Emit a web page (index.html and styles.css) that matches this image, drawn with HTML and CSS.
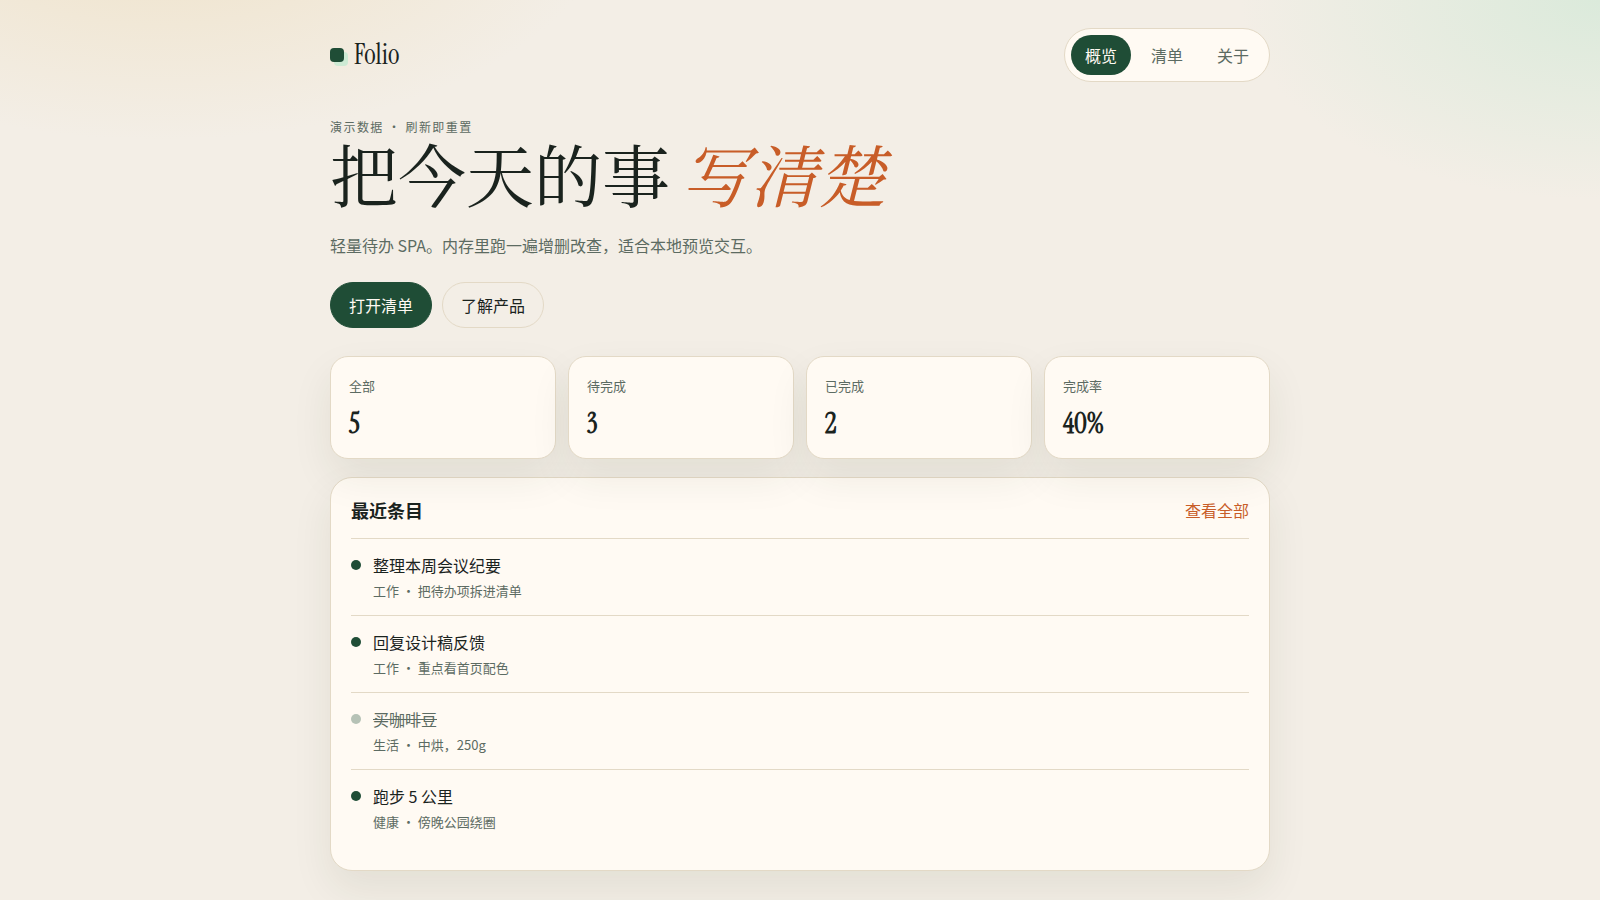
FILE: index.html
```html
<!DOCTYPE html>
<html lang="zh-CN">
<head>
<meta charset="utf-8">
<meta name="viewport" content="width=device-width, initial-scale=1">
<title>Folio</title>
<link rel="stylesheet" href="styles.css">
</head>
<body>
<div class="shell">
  <header class="topbar">
    <a class="brand" href="#overview"><span class="brand-mark"></span>Folio</a>
    <nav class="tabs">
      <a class="tab tab-active" href="#overview">概览</a>
      <a class="tab" href="#list">清单</a>
      <a class="tab" href="#about">关于</a>
    </nav>
  </header>
  <main>
    <section class="hero">
      <p class="eyebrow">演示数据 · 刷新即重置</p>
      <h1 class="headline">把今天的事 <em>写清楚</em></h1>
      <p class="lede">轻量待办 SPA。内存里跑一遍增删改查，适合本地预览交互。</p>
      <div class="actions">
        <button class="btn btn-primary" type="button">打开清单</button>
        <button class="btn" type="button">了解产品</button>
      </div>
    </section>
    <section class="stats">
      <div class="stat"><span class="stat-label">全部</span><strong class="stat-value">5</strong></div>
      <div class="stat"><span class="stat-label">待完成</span><strong class="stat-value">3</strong></div>
      <div class="stat"><span class="stat-label">已完成</span><strong class="stat-value">2</strong></div>
      <div class="stat"><span class="stat-label">完成率</span><strong class="stat-value">40%</strong></div>
    </section>
    <section class="panel">
      <div class="panel-head">
        <h2 class="panel-title">最近条目</h2>
        <a class="panel-link" href="#list">查看全部</a>
      </div>
      <ul class="items">
        <li class="item"><span class="dot"></span><div><p class="item-title">整理本周会议纪要</p><p class="item-meta">工作 · 把待办项拆进清单</p></div></li>
        <li class="item"><span class="dot"></span><div><p class="item-title">回复设计稿反馈</p><p class="item-meta">工作 · 重点看首页配色</p></div></li>
        <li class="item item-done"><span class="dot"></span><div><p class="item-title">买咖啡豆</p><p class="item-meta">生活 · 中烘，250g</p></div></li>
        <li class="item"><span class="dot"></span><div><p class="item-title">跑步 5 公里</p><p class="item-meta">健康 · 傍晚公园绕圈</p></div></li>
      </ul>
    </section>
  </main>
</div>
</body>
</html>
```
FILE: styles.css
```css
:root {
  --bg: #f3eee6;
  --card: #fffaf3;
  --ink: #1a231e;
  --muted: #5c6b62;
  --line: #e3d9c6;
  --green: #1f4d36;
  --accent: #c85d28;
  --serif: "Instrument Serif", "Noto Serif CJK SC", "Noto Serif SC", "Liberation Serif", serif;
  --shadow: 0 18px 40px rgba(40, 48, 16, 0.08);
}

* { box-sizing: border-box; }

body {
  margin: 0;
  min-height: 100vh;
  color: var(--ink);
  font: 16px/24px "Noto Sans CJK SC", sans-serif;
  background:
    radial-gradient(900px 500px at 100% 0%, #dbeadb, transparent 40%),
    radial-gradient(900px 460px at 10% -10%, #efe2c8, transparent 50%),
    var(--bg);
}

h1, h2, p, ul { margin: 0; padding: 0; }
a { color: inherit; text-decoration: none; }

.shell {
  max-width: 980px;
  margin: 0 auto;
  padding: 28px 20px;
}

.topbar {
  display: flex;
  justify-content: space-between;
  align-items: center;
  margin-bottom: 36px;
}

.brand {
  display: flex;
  align-items: center;
  gap: 10px;
  font: 28px/38px var(--serif);
}

.brand-mark {
  width: 14px;
  height: 14px;
  border-radius: 4px;
  background: var(--green);
  box-shadow: 4px 4px 0 #cdead4;
}

.tabs {
  display: flex;
  gap: 6px;
  padding: 6px;
  border: 1px solid var(--line);
  border-radius: 999px;
  background: var(--card);
}

.tab {
  padding: 8px 14px;
  border-radius: 999px;
  color: var(--muted);
}

.tab-active {
  background: var(--green);
  color: #fffaf3;
}

.eyebrow {
  color: var(--muted);
  font-size: 12px;
  line-height: 18px;
  letter-spacing: 0.12em;
}

.headline {
  font: 400 68px/70px var(--serif);
  margin: 8px 0 18px;
}

.headline em { color: var(--accent); }

.lede {
  color: var(--muted);
  line-height: 26px;
}

.actions {
  display: flex;
  gap: 10px;
  margin: 24px 0 28px;
}

.btn {
  padding: 10px 18px;
  border: 1px solid var(--line);
  border-radius: 999px;
  background: transparent;
  color: var(--ink);
  font: inherit;
}

.btn-primary {
  border-color: var(--green);
  background: var(--green);
  color: #fffaf3;
}

.stats {
  display: grid;
  grid-template-columns: repeat(4, 1fr);
  gap: 12px;
  margin-bottom: 18px;
}

.stat {
  display: flex;
  flex-direction: column;
  gap: 8px;
  padding: 19px 18px 14px;
  border: 1px solid var(--line);
  border-radius: 18px;
  background: var(--card);
  box-shadow: var(--shadow);
}

.stat-label {
  color: var(--muted);
  font-size: 13px;
  line-height: 20px;
}

.stat-value { font: 700 28px/40px var(--serif); }

.panel {
  padding: 20px 20px 24px;
  border: 1px solid var(--line);
  border-radius: 22px;
  background: var(--card);
  box-shadow: var(--shadow);
}

.panel-head {
  display: flex;
  justify-content: space-between;
  align-items: center;
  margin-bottom: 16px;
}

.panel-title { font-size: 18px; line-height: 24px; }
.panel-link { color: var(--accent); }

.items { list-style: none; }

.item {
  display: flex;
  gap: 12px;
  padding: 14px 0;
  border-top: 1px solid var(--line);
}

.dot {
  width: 10px;
  height: 10px;
  margin-top: 7px;
  border-radius: 50%;
  background: var(--green);
}

.item-meta {
  margin-top: 4px;
  color: var(--muted);
  font-size: 13px;
  line-height: 20px;
}

.item-done .dot { background: #b6c2b6; }

.item-done .item-title {
  color: var(--muted);
  text-decoration: line-through;
}
```
